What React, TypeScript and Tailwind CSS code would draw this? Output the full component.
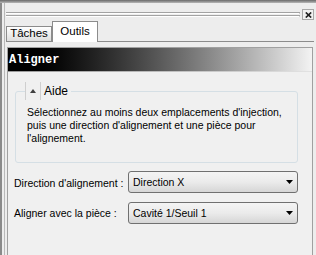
// Outils panel: "Aligner" tool with help box and two combos
import React from "react";

type ComboProps = {
  value: string
}

// windows-7 style drop down list
function Combo({ value }: ComboProps) {
  return (
    <div className="flex items-center justify-between w-[170px] h-[22px] rounded-[3px] border border-[#707070] bg-linear-to-b from-[#f4f4f4] via-[#ebebeb] to-[#d6d6d6] pl-[4px] pr-[4px]">
      <span className="leading-[13px] whitespace-nowrap">{value}</span>
      <svg width="7" height="4" viewBox="0 0 7 4">
        <path d="M0 0H7L3.5 4Z" fill="#000" />
      </svg>
    </div>
  )
}

type TabProps = {
  label: string
  active?: boolean
}

function Tab({ label, active }: TabProps) {
  if (active) {
    return (
      <div className="w-[46px] h-[21px] -mb-[1px] border border-b-0 border-[#8c8c8c] bg-white flex justify-center pt-[3px] leading-[13px] text-[11.5px]">
        {label}
      </div>
    )
  }
  return (
    <div className="w-[46px] h-[15px] border border-b-0 border-[#8c8c8c] bg-linear-to-b from-white to-[#dedede] flex justify-center leading-[13px] text-[11.5px]">
      {label}
    </div>
  )
}

export default function App() {
  return (
    <div className="w-[316px] h-[255px] overflow-hidden flex flex-col bg-[#ededed] text-[10.5px] text-black font-['Liberation_Sans',Arial,sans-serif]">
      <div className="h-[3px] bg-linear-to-b from-[#6a6a6a] to-[#b8b8b8]" />

      <div className="flex-1 flex flex-col border-l-2 border-[#8a8a8a] pl-[2px]">
        <div className="flex-1 flex flex-col border-l border-[#b9b9b9]">
          {/* grip + close */}
          <div className="flex items-center h-[11px] mt-[6px] pl-[1px] pr-[2px]">
            <div className="flex-1 h-[5px] flex flex-col justify-between mr-[2px]">
              <div className="h-[2px] border-t border-[#a3a3a3] border-b border-b-white border-r border-r-[#a3a3a3]" />
              <div className="h-[2px] border-t border-[#a3a3a3] border-b border-b-white border-r border-r-[#a3a3a3]" />
            </div>
            <div className="w-[12px] h-[11px] border border-[#a8a8a8] bg-[#f2f2f2] flex items-center justify-center">
              <svg width="7" height="6" viewBox="0 0 7 6">
                <path d="M0.8 0.5L6.2 5.5M6.2 0.5L0.8 5.5" stroke="#222" strokeWidth="1.7" />
              </svg>
            </div>
          </div>

          {/* tabs */}
          <div className="flex items-end h-[21px] mt-[1px] ml-[1px] mr-[2px] border-b border-[#8c8c8c]">
            <Tab label="Tâches" />
            <Tab label="Outils" active />
          </div>

          {/* tool panel */}
          <div className="flex-1 flex flex-col mt-[5px] ml-[2px] mr-[3px] border border-b-0 border-[#a0a0a0] bg-[#f0f0f0]">
            <div className="h-[23px] flex items-center pl-[1px] pt-[1px] bg-linear-to-r from-black from-[3%] to-[#f3f3f3] text-white font-bold text-[12px] font-['Liberation_Mono','Courier_New',monospace]">
              Aligner
            </div>
            <div className="h-px bg-linear-to-r from-[#9a9a9a] to-[#e2e2e2]" />

            <div className="flex-1 flex flex-col pl-[6px]">
              <fieldset className="mt-[10px] ml-[1px] w-[283px] border border-[#d5dfe5] rounded-[3px] px-[11px] pt-[6px] pb-[17px]">
                <legend className="-ml-[2px] flex items-center h-[18px]">
                  <span className="w-[16px] h-[18px] border-x border-[#cfcfcf] flex items-center justify-center">
                    <svg width="6" height="4" viewBox="0 0 6 4">
                      <path d="M0 4H6L3 0Z" fill="#404040" />
                    </svg>
                  </span>
                  <span className="pl-[3px] pr-[3px] text-[12px] leading-[13px]">Aide</span>
                </legend>
                <p className="leading-[13px] whitespace-nowrap">
                  Sélectionnez au moins deux emplacements d'injection,<br />
                  puis une direction d'alignement et une pièce pour<br />
                  l'alignement.
                </p>
              </fieldset>

              <div className="flex items-center h-[22px] mt-[8px]">
                <span className="w-[114px] pt-[2px] leading-[13px] whitespace-nowrap">Direction d'alignement :</span>
                <Combo value="Direction X" />
              </div>
              <div className="flex items-center h-[22px] mt-[9px]">
                <span className="w-[114px] pt-[1px] leading-[13px] whitespace-nowrap">Aligner avec la pièce :</span>
                <Combo value="Cavité 1/Seuil 1" />
              </div>
            </div>
          </div>
        </div>
      </div>
    </div>
  )
}
